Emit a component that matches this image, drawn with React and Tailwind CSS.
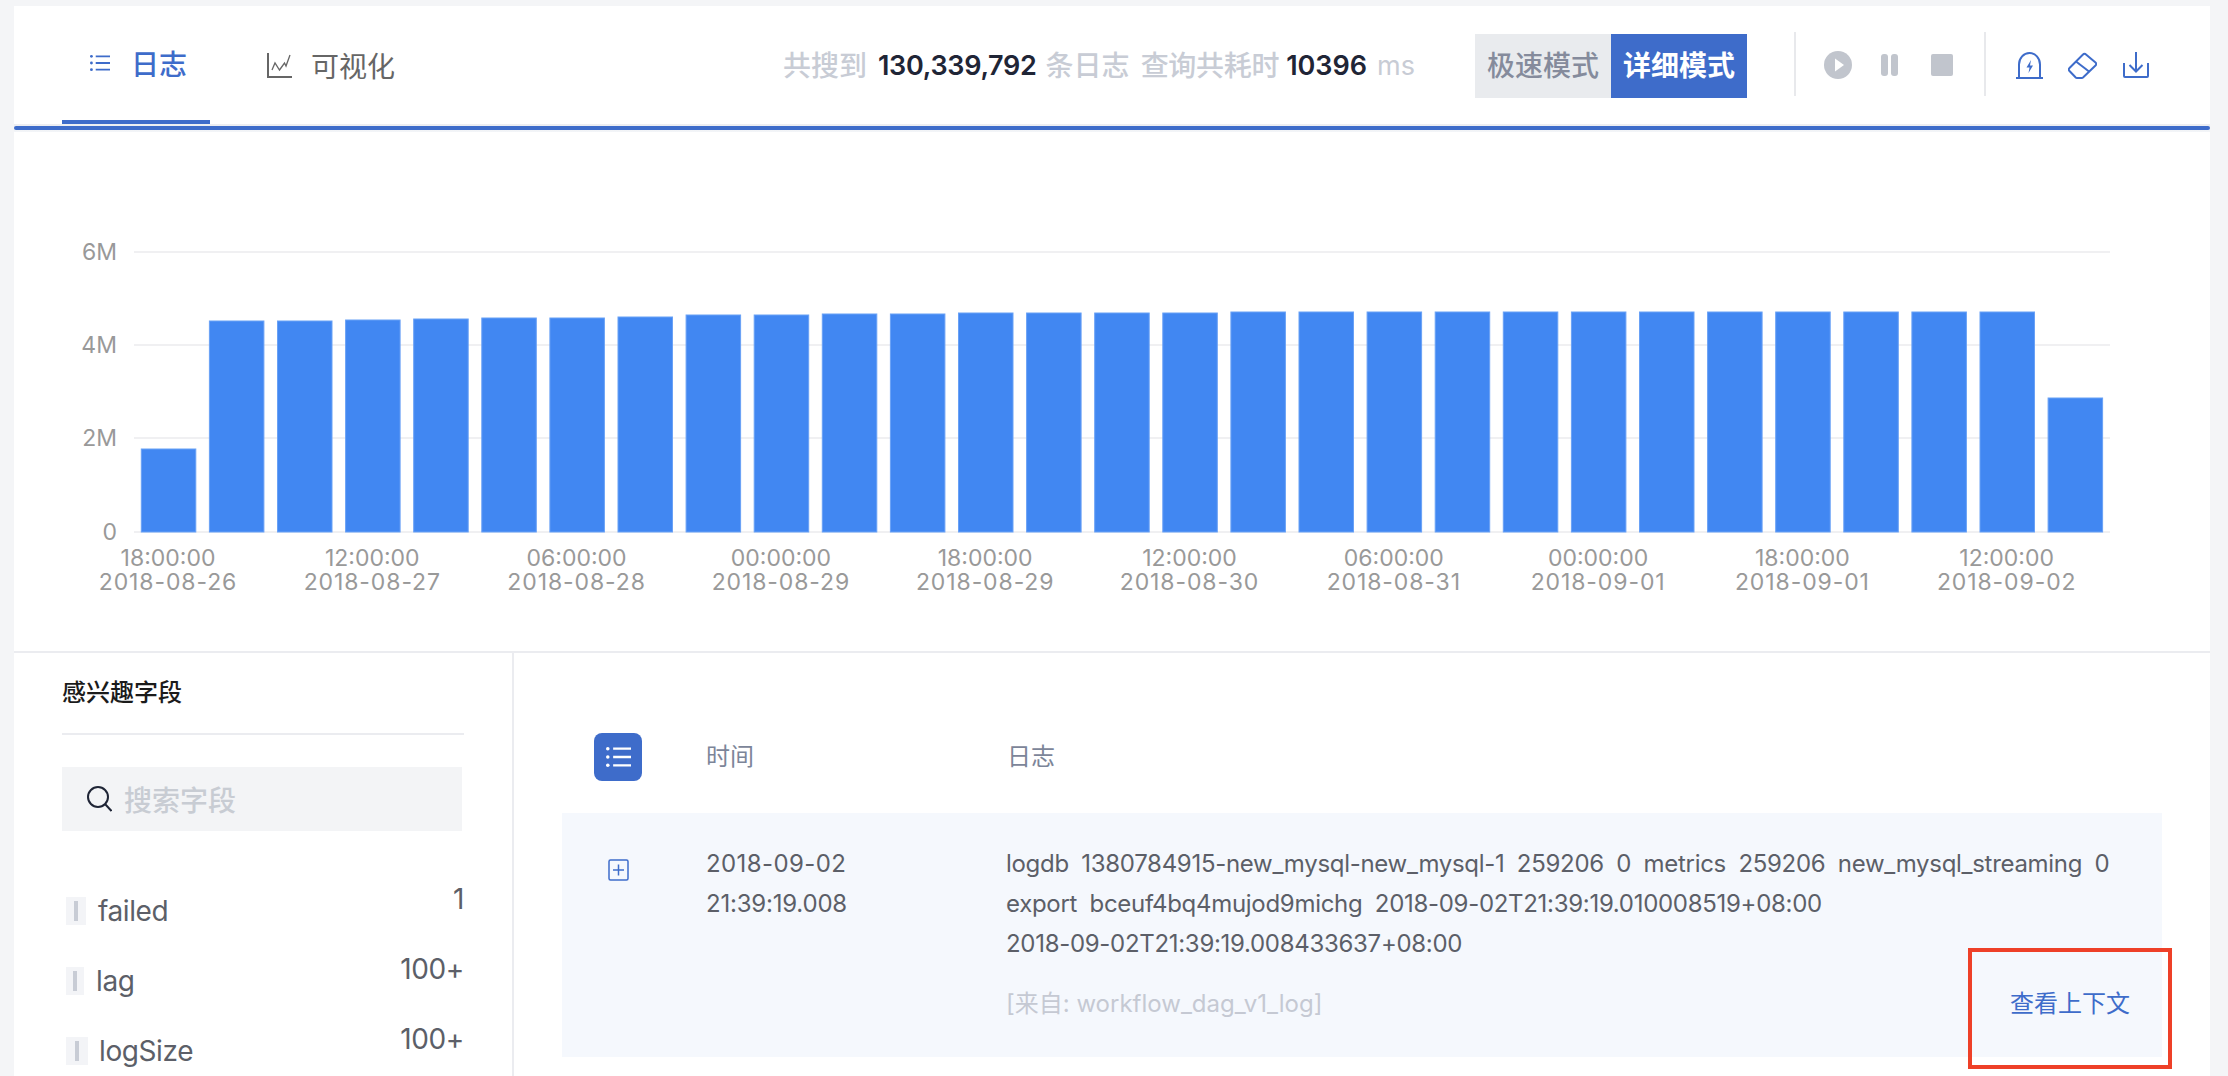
const BAR_HEIGHTS = [83, 211, 211, 212, 213, 214, 214, 215, 217, 217, 218, 218, 219, 219, 219, 219, 220, 220, 220, 220, 220, 220, 220, 220, 220, 220, 220, 220, 134];

const AXIS_LABELS = [
  ['18:00:00', '2018-08-26'],
  ['12:00:00', '2018-08-27'],
  ['06:00:00', '2018-08-28'],
  ['00:00:00', '2018-08-29'],
  ['18:00:00', '2018-08-29'],
  ['12:00:00', '2018-08-30'],
  ['06:00:00', '2018-08-31'],
  ['00:00:00', '2018-09-01'],
  ['18:00:00', '2018-09-01'],
  ['12:00:00', '2018-09-02'],
];

const Y_TICKS = [
  { label: '6M', y: 252 },
  { label: '4M', y: 345 },
  { label: '2M', y: 438 },
  { label: '0', y: 532 },
];

const FIELDS = [
  { name: 'failed', count: '1', badge: 'w-[20px]', gap: 'ml-[12px]' },
  { name: 'lag', count: '100+', badge: 'w-[18px]', gap: 'ml-[12px]' },
  { name: 'logSize', count: '100+', badge: 'w-[22px]', gap: 'ml-[11px]' },
];

function ListIcon({ className }) {
  return (
    <svg viewBox="0 0 21 18" className={className} fill="none" stroke="currentColor" strokeWidth="2">
      <path d="M6 2h15M6 9h15M6 16h15" />
      <circle cx="1.5" cy="2" r="1.5" fill="currentColor" stroke="none" />
      <circle cx="1.5" cy="9" r="1.5" fill="currentColor" stroke="none" />
      <circle cx="1.5" cy="16" r="1.5" fill="currentColor" stroke="none" />
    </svg>
  );
}

function ChartIcon() {
  return (
    <svg viewBox="0 0 25 25" className="w-[25px] h-[25px] text-[#666]" fill="none" stroke="currentColor">
      <path d="M1 0v24h24" strokeWidth="2" />
      <path d="M5 17l3-7 4.5 7 5-7 1.5 3 4-11" strokeWidth="1.3" />
    </svg>
  );
}

function Header() {
  return (
    <div className="flex items-center h-[118px] pr-[61px] shrink-0">
      <div className="flex items-center h-full ml-[48px] w-[148px] pl-[28px] border-b-4 border-[#3e6cca] text-[#3e6cca]">
        <ListIcon className="w-[20px] h-[18px]" />
        <span className="ml-[21px] mt-[4px] text-[28px] font-medium">日志</span>
      </div>
      <div className="flex items-center h-full ml-[57px] text-[#666]">
        <ChartIcon />
        <span className="ml-[19px] mt-[4px] text-[28px]">可视化</span>
      </div>

      <div className="ml-auto mt-[2px] flex items-center text-[28px] font-medium text-[#c8ccd5]">
        <span>共搜到</span>
        <span className="ml-[11px] text-[27px] font-semibold tracking-[-0.3px] text-[#1f2536]">130,339,792</span>
        <span className="ml-[9px]">条日志</span>
        <span className="ml-[11px] tracking-[-0.3px]">查询共耗时</span>
        <span className="ml-[7px] text-[27px] font-semibold text-[#1f2536]">10396</span>
        <span className="ml-[10px] text-[27px] font-normal">ms</span>
      </div>

      <div className="ml-[60px] mt-[2px] flex h-[64px] text-[28px] font-medium">
        <div className="w-[136px] flex items-center justify-center bg-[#e9ebee] text-[#858b9c]">极速模式</div>
        <div className="w-[136px] flex items-center justify-center bg-[#3e6cca] text-white font-semibold">详细模式</div>
      </div>

      <div className="ml-[47px] mb-[2px] w-[2px] h-[64px] bg-[#e8e9ec]" />
      <div className="ml-[28px] flex items-center">
        <svg viewBox="0 0 28 28" className="w-[28px] h-[28px]">
          <circle cx="14" cy="14" r="14" fill="#c1c5cd" />
          <path d="M11 7.5l9 6.5-9 6.5z" fill="#fff" />
        </svg>
        <div className="ml-[29px] flex gap-[3px]">
          <div className="w-[7px] h-[22px] rounded-[3px] bg-[#c1c5cd]" />
          <div className="w-[7px] h-[22px] rounded-[3px] bg-[#c1c5cd]" />
        </div>
        <div className="ml-[33px] w-[22px] h-[22px] rounded-[2px] bg-[#c1c5cd]" />
      </div>
      <div className="ml-[31px] mb-[2px] w-[2px] h-[64px] bg-[#e8e9ec]" />
      <div className="ml-[30px] flex items-center text-[#3e6cca]">
        <svg viewBox="0 0 27 27" className="w-[27px] h-[27px]" fill="none" stroke="currentColor" strokeWidth="2">
          <path d="M3 26V12.5a10.5 11.5 0 0 1 21 0V26" />
          <path d="M0 26h27" />
          <path d="M15 8l-4.5 7.5h3L12.5 21l4.5-7.5h-3z" fill="currentColor" stroke="none" />
        </svg>
        <svg viewBox="0 0 29 27" className="ml-[25px] w-[29px] h-[27px]" fill="none" stroke="currentColor" strokeWidth="2" strokeLinejoin="round">
          <path d="M15 2.5a2 2 0 0 1 3 0l9.5 8a2 2 0 0 1 0 3L15 25.5a2 2 0 0 1-1.5.5H9a2 2 0 0 1-1.5-.7L1.5 19a2 2 0 0 1 0-3z" />
          <path d="M8 9.5l13 10" />
        </svg>
        <svg viewBox="0 0 26 26" className="ml-[26px] w-[26px] h-[26px]" fill="none" stroke="currentColor" strokeWidth="2">
          <path d="M1 11v13a1 1 0 0 0 1 1h22a1 1 0 0 0 1-1V11" />
          <path d="M13 0v19M6.5 13l6.5 6.5 6.5-6.5" />
        </svg>
      </div>
    </div>
  );
}

function Chart() {
  return (
    <svg viewBox="14 132 2196 519" className="block w-[2196px] h-[519px] shrink-0">
      {Y_TICKS.map((t) => (
        <g key={t.label}>
          <line x1="134" x2="2110" y1={t.y} y2={t.y} stroke="#f0f0f2" strokeWidth="2" />
          <text x="117" y={t.y + 8} textAnchor="end" fontSize="23" fill="#999">{t.label}</text>
        </g>
      ))}
      {BAR_HEIGHTS.map((h, i) => (
        <rect key={i} x={141.3 + i * 68.1} y={532 - h} width="54.5" height={h} fill="#4187f2" stroke="#69a1f6" strokeWidth="1" />
      ))}
      {AXIS_LABELS.map(([time, date], i) => (
        <text key={i} textAnchor="middle" fontSize="23" fill="#999">
          <tspan x={168 + i * 204.3} y="566">{time}</tspan>
          <tspan x={168 + i * 204.3} y="590" letterSpacing="0.9">{date}</tspan>
        </text>
      ))}
    </svg>
  );
}

function Sidebar() {
  return (
    <div className="w-[500px] shrink-0 pl-[48px] pr-[48px] pt-[25px] border-r-2 border-[#ebecf0]">
      <div className="pb-[25px] border-b-2 border-[#ebecf0] text-[24px] leading-[30px] font-medium text-[#1b1b1b]">感兴趣字段</div>
      <div className="mt-[32px] mr-[2px] h-[64px] flex items-center pl-[25px] bg-[#f3f4f6]">
        <svg viewBox="0 0 25 26" className="w-[25px] h-[26px]" fill="none" stroke="#1f2536" strokeWidth="2">
          <circle cx="11" cy="11" r="10" />
          <path d="M18 18l6.5 7" />
        </svg>
        <span className="ml-[12px] mt-[3px] text-[28px] font-medium text-[#c8ccd3]">搜索字段</span>
      </div>
      <div className="mt-[53px]">
        {FIELDS.map((f) => (
          <div key={f.name} className="flex justify-between h-[70px] text-[28px] leading-[30px] tracking-[-0.4px] text-[#5c5f68]">
            <div className="flex items-center h-[30px] mt-[12px] pl-[4px]">
              <div className={`${f.badge} h-[28px] flex items-center justify-center bg-[#f3f4f7]`}>
                <div className="w-[4px] h-[20px] bg-[#c8ccd5]" />
              </div>
              <span className={f.gap}>{f.name}</span>
            </div>
            <span>{f.count}</span>
          </div>
        ))}
      </div>
    </div>
  );
}

function LogTable() {
  return (
    <div className="flex-1 min-w-0 pl-[48px] pr-[48px] pt-[80px]">
      <div className="flex items-center h-[48px] pl-[32px] text-[24px] text-[#7c8599]">
        <div className="w-[48px] h-[48px] rounded-[8px] bg-[#3e6cca] flex items-center justify-center text-white">
          <ListIcon className="w-[25px] h-[22px]" />
        </div>
        <span className="ml-[64px] w-[301px]">时间</span>
        <span>日志</span>
      </div>
      <div className="mt-[32px] h-[244px] flex bg-[#f5f8fd] pt-[31px] text-[24px] leading-[40px] text-[#5c5f68]">
        <svg viewBox="0 0 21 22" className="ml-[46px] mt-[15px] w-[21px] h-[22px] shrink-0" fill="none" stroke="#3e6cca" strokeWidth="1.5">
          <rect x="1" y="1" width="19" height="20" rx="1.5" />
          <path d="M10.5 5.5v11M5 11h11" />
        </svg>
        <div className="ml-[77px] w-[300px] shrink-0">
          <div className="tracking-[0.4px]">2018-09-02</div>
          <div className="tracking-[-0.2px]">21:39:19.008</div>
        </div>
        <div className="flex-1 min-w-0 pr-[32px] whitespace-nowrap">
          <div className="tracking-[-0.3px] [word-spacing:6px]">logdb 1380784915-new_mysql-new_mysql-1 259206 0 metrics 259206 new_mysql_streaming 0</div>
          <div className="tracking-[-0.3px] [word-spacing:6px]">export bceuf4bq4mujod9michg 2018-09-02T21:39:19.010008519+08:00</div>
          <div className="tracking-[-0.3px]">2018-09-02T21:39:19.008433637+08:00</div>
          <div className="mt-[20px] flex justify-between">
            <span className="text-[#c5c9d3]">[来自: workflow_dag_v1_log]</span>
            <span className="text-[#3e6cca]">查看上下文</span>
          </div>
        </div>
      </div>
    </div>
  );
}

export default function App() {
  return (
    <div className="relative h-[1076px] overflow-hidden bg-[#f4f5f7] pt-[6px] pl-[14px] pr-[18px] font-[Inter,'Noto_Sans_CJK_SC',sans-serif]">
      <div className="flex flex-col h-full bg-white">
        <Header />
        <div className="h-[8px] shrink-0 bg-gradient-to-b from-[#ecedf1] to-[#f3f5f8] py-[2px]">
          <div className="h-[4px] rounded-full bg-[#3e6cca]" />
        </div>
        <Chart />
        <div className="h-[2px] shrink-0 bg-[#ebecf0]" />
        <div className="flex flex-1 min-h-0">
          <Sidebar />
          <LogTable />
        </div>
      </div>
      <div className="absolute left-[1968px] top-[948px] w-[204px] h-[121px] border-4 border-[#ee4028]" />
    </div>
  );
}
